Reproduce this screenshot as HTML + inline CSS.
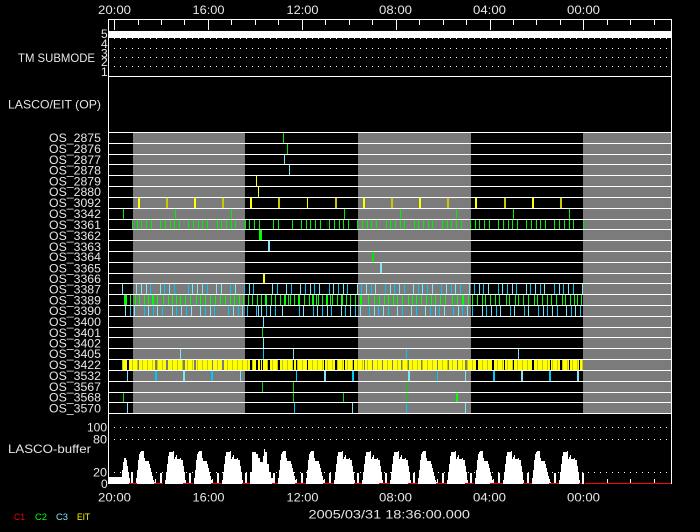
<!DOCTYPE html>
<html><head><meta charset="utf-8"><title>LASCO/EIT plot</title>
<style>
html,body{margin:0;padding:0;background:#000;width:700px;height:532px;overflow:hidden}
svg{display:block}
text{font-family:"Liberation Sans",sans-serif;fill:#e6e6e6;font-size:12px}
.s{font-size:9.5px}
</style></head><body>
<svg width="700" height="532" viewBox="0 0 700 532" xmlns="http://www.w3.org/2000/svg">
<rect width="700" height="532" fill="#000"/>
<defs>
<path id="a" d="M-10 484V479H-9V484ZM-5 484V473H-3V484ZM0 484V478H1V470H2V460H3V454H4V452H5V451H8V458H9V461H13V464H14V468H15V472H16V476H17V480H18V482H19V484Z"/>
<path id="b" d="M-10 484V479H-9V484ZM-5 484V473H-3V484ZM0 484V480H1V472H2V464H3V456H4V452H8V451H9V459H10V457H11V455H12V459H15V458H16V460H18V466H19V472H20V480H21V484Z"/>
<path id="c" d="M-10 484V479H-9V484ZM-5 484V473H-3V484ZM0 484V472H2V452H6V454H8V458H10V462H13V456H14V449H15V452H17V464H19V472H21V478H23V482H24V484Z"/>
</defs>
<g shape-rendering="crispEdges" fill="none">
<!-- gray bands -->
<g fill="#7b7b7b"><rect x="133" y="133" width="112" height="280"/><rect x="358" y="133" width="113" height="280"/><rect x="583" y="133" width="88" height="280"/></g>

<!-- row 14 -->
<path stroke="#80e4f4" d="M122.5 284v10M136.5 284v10M141.5 284v10M146.5 284v10M160.5 284v10M169.5 284v10M192.5 284v10M197.5 284v10M202.5 284v10M216.5 284v10M221.5 284v10M235.5 284v10M249.5 284v10M272.5 284v10M286.5 284v10M300.5 284v10M310.5 284v10M319.5 284v10M333.5 284v10M343.5 284v10M357.5 284v10M366.5 284v10M375.5 284v10M390.5 284v10M399.5 284v10M413.5 284v10M422.5 284v10M432.5 284v10M446.5 284v10M455.5 284v10M469.5 284v10M479.5 284v10M488.5 284v10M502.5 284v10M512.5 284v10M526.5 284v10M535.5 284v10M544.5 284v10M559.5 284v10M568.5 284v10M582.5 284v10"/>
<path stroke="#00c8ff" d="M150.5 284v10M164.5 284v10M174.5 284v10M188.5 284v10M207.5 284v10M230.5 284v10M244.5 284v10M253.5 284v10M277.5 284v10M291.5 284v10M305.5 284v10M314.5 284v10M329.5 284v10M338.5 284v10M347.5 284v10M361.5 284v10M371.5 284v10M385.5 284v10M394.5 284v10M404.5 284v10M418.5 284v10M427.5 284v10M441.5 284v10M451.5 284v10M460.5 284v10M474.5 284v10M483.5 284v10M498.5 284v10M507.5 284v10M516.5 284v10M530.5 284v10M540.5 284v10M554.5 284v10M563.5 284v10M573.5 284v10"/>
<!-- row 15 -->
<path stroke="#00ff00" d="M124.5 295v10M125.5 295v10M126.5 295v10M130.5 295v10M135.5 295v10M139.5 295v10M144.5 295v10M148.5 295v10M152.5 295v10M153.5 295v10M157.5 295v10M163.5 295v10M168.5 295v10M172.5 295v10M176.5 295v10M180.5 295v10M185.5 295v10M190.5 295v10M196.5 295v10M200.5 295v10M205.5 295v10M210.5 295v10M215.5 295v10M220.5 295v10M225.5 295v10M230.5 295v10M234.5 295v10M239.5 295v10M243.5 295v10M248.5 295v10M252.5 295v10M257.5 295v10M261.5 295v10M265.5 295v10M266.5 295v10M271.5 295v10M275.5 295v10M280.5 295v10M284.5 295v10M285.5 295v10M288.5 295v10M290.5 295v10M294.5 295v10M298.5 295v10M299.5 295v10M304.5 295v10M309.5 295v10M312.5 295v10M313.5 295v10M316.5 295v10M318.5 295v10M322.5 295v10M326.5 295v10M327.5 295v10M330.5 295v10M332.5 295v10M337.5 295v10M341.5 295v10M342.5 295v10M346.5 295v10M350.5 295v10M355.5 295v10M360.5 295v10M361.5 295v10M368.5 295v10M374.5 295v10M379.5 295v10M384.5 295v10M388.5 295v10M393.5 295v10M397.5 295v10M402.5 295v10M408.5 295v10M412.5 295v10M416.5 295v10M421.5 295v10M426.5 295v10M431.5 295v10M435.5 295v10M440.5 295v10M445.5 295v10M452.5 295v10M457.5 295v10M462.5 295v10M463.5 295v10M468.5 295v10M472.5 295v10M477.5 295v10M482.5 295v10M485.5 295v10M490.5 295v10M495.5 295v10M499.5 295v10M506.5 295v10M509.5 295v10M515.5 295v10M518.5 295v10M523.5 295v10M528.5 295v10M534.5 295v10M537.5 295v10M542.5 295v10M547.5 295v10M551.5 295v10M556.5 295v10M562.5 295v10M565.5 295v10M570.5 295v10M574.5 295v10M577.5 295v10M581.5 295v10"/>
<!-- row 16 -->
<path stroke="#80e4f4" d="M125.5 306v10M134.5 306v10M148.5 306v10M157.5 306v10M172.5 306v10M181.5 306v10M191.5 306v10M200.5 306v10M210.5 306v10M233.5 306v10M242.5 306v10M258.5 306v10M261.5 306v10M270.5 306v10M282.5 306v10M303.5 306v10M317.5 306v10M327.5 306v10M341.5 306v10M350.5 306v10M360.5 306v10M374.5 306v10M383.5 306v10M397.5 306v10M411.5 306v10M425.5 306v10M435.5 306v10M444.5 306v10M458.5 306v10M467.5 306v10M482.5 306v10M491.5 306v10M500.5 306v10M514.5 306v10M528.5 306v10M543.5 306v10M552.5 306v10M566.5 306v10M575.5 306v10"/>
<path stroke="#00c8ff" d="M130.5 306v10M144.5 306v10M153.5 306v10M162.5 306v10M176.5 306v10M186.5 306v10M205.5 306v10M214.5 306v10M228.5 306v10M238.5 306v10M247.5 306v10M256.5 306v10M266.5 306v10M275.5 306v10M299.5 306v10M313.5 306v10M322.5 306v10M331.5 306v10M345.5 306v10M355.5 306v10M369.5 306v10M378.5 306v10M388.5 306v10M402.5 306v10M416.5 306v10M430.5 306v10M439.5 306v10M453.5 306v10M462.5 306v10M472.5 306v10M486.5 306v10M496.5 306v10M510.5 306v10M524.5 306v10M538.5 306v10M547.5 306v10M557.5 306v10M571.5 306v10M580.5 306v10"/>

<!-- singles -->
<path stroke="#00e800" d="M283.5 133v10M287.5 144v10M372.5 252v10M373.5 252v10"/>
<path stroke="#80e4f4" d="M284.5 155v9M289.5 165v10M263.5 317v10M263.5 338v10M180.5 349v10M293.5 349v10M518.5 349v10M127.5 371v10M465.5 371v10M127.5 403v10M352.5 403v10M465.5 403v10"/>
<path stroke="#00e800" d="M262.5 328v9"/>
<path stroke="#ffff00" d="M256.5 176v10M258.5 187v10M307.5 198v10"/>
<rect x="259" y="230" width="3" height="10" fill="#00ff00"/>
<rect x="268" y="241" width="2" height="10" fill="#80e4f4"/>
<rect x="380" y="263" width="2" height="10" fill="#80e4f4"/>
<rect x="263" y="274" width="2" height="9" fill="#ffff00"/>
<path stroke="#00c8ff" d="M263.5 349v10M406.5 349v10M296.5 371v10M437.5 371v10M294.5 403v10M406.5 403v10"/>

<!-- row 6 yellow -->
<g fill="#ffff00"><rect x="138" y="198" width="2" height="10"/><rect x="194" y="198" width="2" height="10"/><rect x="250" y="198" width="2" height="10"/><rect x="363" y="198" width="2" height="10"/><rect x="419" y="198" width="2" height="10"/><rect x="475" y="198" width="2" height="10"/><rect x="532" y="198" width="2" height="10"/></g>
<g fill="#c8c800"><rect x="166" y="198" width="2" height="10"/><rect x="222" y="198" width="2" height="10"/><rect x="278" y="198" width="2" height="10"/><rect x="335" y="198" width="2" height="10"/><rect x="391" y="198" width="2" height="10"/><rect x="447" y="198" width="2" height="10"/><rect x="504" y="198" width="2" height="10"/><rect x="560" y="198" width="2" height="10"/></g>

<!-- row 7, 8 -->
<path stroke="#00f000" d="M123.5 209v10M175.5 209v10M231.5 209v10M344.5 209v10M400.5 209v10M456.5 209v10M513.5 209v10M569.5 209v10"/>
<path stroke="#00f000" d="M132.5 220v9M137.5 220v9M141.5 220v9M146.5 220v9M151.5 220v9M160.5 220v9M165.5 220v9M170.5 220v9M174.5 220v9M179.5 220v9M188.5 220v9M193.5 220v9M198.5 220v9M202.5 220v9M207.5 220v9M217.5 220v9M221.5 220v9M226.5 220v9M231.5 220v9M235.5 220v9M245.5 220v9M249.5 220v9M254.5 220v9M259.5 220v9M273.5 220v9M278.5 220v9M292.5 220v9M301.5 220v9M306.5 220v9M310.5 220v9M315.5 220v9M320.5 220v9M329.5 220v9M334.5 220v9M339.5 220v9M343.5 220v9M348.5 220v9M357.5 220v9M362.5 220v9M367.5 220v9M371.5 220v9M376.5 220v9M386.5 220v9M390.5 220v9M395.5 220v9M400.5 220v9M404.5 220v9M414.5 220v9M418.5 220v9M423.5 220v9M428.5 220v9M432.5 220v9M442.5 220v9M447.5 220v9M451.5 220v9M456.5 220v9M461.5 220v9M470.5 220v9M475.5 220v9M479.5 220v9M484.5 220v9M489.5 220v9M498.5 220v9M503.5 220v9M508.5 220v9M512.5 220v9M517.5 220v9M526.5 220v9M531.5 220v9M536.5 220v9M540.5 220v9M545.5 220v9M554.5 220v9M559.5 220v9M564.5 220v9M569.5 220v9M573.5 220v9M583.5 220v9"/>

<!-- row 21 yellow -->
<rect x="122" y="360" width="461" height="10" fill="#ffff00"/>
<path d="M122 365H583" stroke="#c8c800" stroke-width="10" stroke-dasharray="1 4"/>
<path stroke="#000" d="M127.5 360v10M128.5 360v10M250.5 360v10M251.5 360v10M256.5 360v10M257.5 360v10M260.5 360v10M262.5 360v10M268.5 360v10M269.5 360v10M278.5 360v10M279.5 360v10M293.5 360v10M296.5 360v10M307.5 360v10M324.5 360v10M335.5 360v10M336.5 360v10M344.5 360v10M353.5 360v10M476.5 360v10M477.5 360v10M492.5 360v10M493.5 360v10M504.5 360v10M513.5 360v10M532.5 360v10M533.5 360v10M550.5 360v10M560.5 360v10M561.5 360v10M569.5 360v10M579.5 360v10"/>
<path stroke="#7b7b7b" d="M138.5 360v10M155.5 360v10M156.5 360v10M166.5 360v10M167.5 360v10M183.5 360v10M184.5 360v10M194.5 360v10M195.5 360v10M212.5 360v10M222.5 360v10M223.5 360v10M364.5 360v10M372.5 360v10M382.5 360v10M392.5 360v10M401.5 360v10M408.5 360v10M421.5 360v10M437.5 360v10M448.5 360v10M457.5 360v10M466.5 360v10M465.5 360v10"/>

<!-- row 22 -->
<g fill="#00c8ff"><rect x="155" y="371" width="2" height="10"/><rect x="211" y="371" width="2" height="10"/><rect x="352" y="371" width="2" height="10"/><rect x="493" y="371" width="2" height="10"/><rect x="549" y="371" width="2" height="10"/><rect x="296" y="371" width="1" height="10"/></g>
<g fill="#80e4f4"><rect x="183" y="371" width="2" height="10"/><rect x="240" y="371" width="1" height="10"/><rect x="324" y="371" width="2" height="10"/><rect x="408" y="371" width="2" height="10"/><rect x="521" y="371" width="2" height="10"/><rect x="577" y="371" width="2" height="10"/></g>
<rect x="465" y="371" width="1" height="10" fill="#80e4f4"/>

<!-- row 23-25 -->
<path stroke="#00d800" d="M262.5 382v10M293.5 382v10M406.5 382v10M293.5 393v9M406.5 393v9M123.5 393v9M343.5 393v9"/>
<rect x="456" y="393" width="2" height="9" fill="#00ff00"/>

<!-- row lines -->
<path stroke="#fff" d="M108 132.500H672M108 143.500H672M108 154.500H672M108 164.500H672M108 175.500H672M108 186.500H672M108 197.500H672M108 208.500H672M108 219.500H672M108 229.500H672M108 240.500H672M108 251.500H672M108 262.500H672M108 273.500H672M108 283.500H672M108 294.500H672M108 305.500H672M108 316.500H672M108 327.500H672M108 337.500H672M108 348.500H672M108 359.500H672M108 370.500H672M108 381.500H672M108 392.500H672M108 402.500H672M108 413.500H672"/>

<!-- top panel -->
<rect x="109" y="31" width="562" height="7" fill="#fff"/>
<path stroke="#fff" stroke-dasharray="1 5" d="M114 38.500H671M114 48.500H671M114 57.500H671M114 66.500H671M114 427.500H671M114 439.500H671M114 472.500H671"/>

<!-- buffer -->
<g fill="#fff">
<path d="M109 484V477H122V470H123V462H124V458H126V460H127V466H128V472H129V478H130V484ZM131 484V472H133V484Z"/>
<use href="#a" x="136"/><use href="#b" x="165"/><use href="#a" x="194"/><use href="#b" x="222"/><use href="#c" x="250"/><use href="#a" x="278"/><use href="#a" x="306"/><use href="#b" x="334"/><use href="#b" x="362"/><use href="#b" x="390"/><use href="#a" x="418"/><use href="#b" x="447"/><use href="#a" x="475"/><use href="#b" x="503"/><use href="#a" x="532"/><use href="#b" x="559"/>
<path d="M582 484V473H584V484Z"/>
</g>
<path stroke="#ff0000" d="M129 483.500H137M154 483.500H163M183 483.500H193M211 483.500H222M242 483.500H250M272 483.500H278M295 483.500H306M323 483.500H334M354 483.500H362M379 483.500H390M408 483.500H418M436 483.500H447M465 483.500H474M490 483.500H503M523 483.500H532M549 483.500H559M579 483.500H582M585 483.500H671"/>

<!-- ticks bottom -->
<path stroke="#fff" d="M607.500 479v4M630.500 479v4M654.500 479v4"/>

<!-- frame -->
<path stroke="#fff" d="M108 19.500H672M108 76.500H672M108.500 19V484M671.500 19V484"/>
<path stroke="#fff" d="M114.500 19V30M208.500 19V30M302.500 19V30M396.500 19V30M490.500 19V30M583.500 19V30M138.500 19V25M161.500 19V25M184.500 19V25M231.500 19V25M255.500 19V25M278.500 19V25M325.500 19V25M349.500 19V25M372.500 19V25M419.500 19V25M443.500 19V25M466.500 19V25M513.500 19V25M536.500 19V25M560.500 19V25M607.500 19V25M630.500 19V25M654.500 19V25"/>
</g>

<!-- text -->
<text x="98" y="14" textLength="33" lengthAdjust="spacingAndGlyphs">20:00</text>
<text x="192.500" y="14" textLength="32" lengthAdjust="spacingAndGlyphs">16:00</text>
<text x="286.500" y="14" textLength="32" lengthAdjust="spacingAndGlyphs">12:00</text>
<text x="379" y="14" textLength="33" lengthAdjust="spacingAndGlyphs">08:00</text>
<text x="473" y="14" textLength="33" lengthAdjust="spacingAndGlyphs">04:00</text>
<text x="567" y="14" textLength="33" lengthAdjust="spacingAndGlyphs">00:00</text>

<text x="98" y="501.700" textLength="33" lengthAdjust="spacingAndGlyphs">20:00</text>
<text x="192.500" y="501.700" textLength="32" lengthAdjust="spacingAndGlyphs">16:00</text>
<text x="286.500" y="501.700" textLength="32" lengthAdjust="spacingAndGlyphs">12:00</text>
<text x="379" y="501.700" textLength="33" lengthAdjust="spacingAndGlyphs">08:00</text>
<text x="473" y="501.700" textLength="33" lengthAdjust="spacingAndGlyphs">04:00</text>
<text x="567" y="501.700" textLength="33" lengthAdjust="spacingAndGlyphs">00:00</text>

<text x="101" y="38">5</text><text x="101" y="48">4</text><text x="101" y="57.500">3</text><text x="101" y="66">2</text><text x="101" y="76">1</text>
<text x="18" y="62" textLength="77" lengthAdjust="spacingAndGlyphs">TM SUBMODE</text>
<text x="8" y="108.500" textLength="93" lengthAdjust="spacingAndGlyphs">LASCO/EIT (OP)</text>

<text x="49" y="142" textLength="52" lengthAdjust="spacingAndGlyphs">OS_2875</text>
<text x="49" y="153" textLength="52" lengthAdjust="spacingAndGlyphs">OS_2876</text>
<text x="49" y="164" textLength="52" lengthAdjust="spacingAndGlyphs">OS_2877</text>
<text x="49" y="174.700" textLength="52" lengthAdjust="spacingAndGlyphs">OS_2878</text>
<text x="49" y="185.300" textLength="52" lengthAdjust="spacingAndGlyphs">OS_2879</text>
<text x="49" y="196" textLength="52" lengthAdjust="spacingAndGlyphs">OS_2880</text>
<text x="49" y="207" textLength="52" lengthAdjust="spacingAndGlyphs">OS_3092</text>
<text x="49" y="218" textLength="52" lengthAdjust="spacingAndGlyphs">OS_3342</text>
<text x="49" y="229" textLength="52" lengthAdjust="spacingAndGlyphs">OS_3361</text>
<text x="49" y="240" textLength="52" lengthAdjust="spacingAndGlyphs">OS_3362</text>
<text x="49" y="251" textLength="52" lengthAdjust="spacingAndGlyphs">OS_3363</text>
<text x="49" y="261" textLength="52" lengthAdjust="spacingAndGlyphs">OS_3364</text>
<text x="49" y="272.700" textLength="52" lengthAdjust="spacingAndGlyphs">OS_3365</text>
<text x="49" y="283" textLength="52" lengthAdjust="spacingAndGlyphs">OS_3366</text>
<text x="49" y="293.700" textLength="52" lengthAdjust="spacingAndGlyphs">OS_3387</text>
<text x="49" y="304.700" textLength="52" lengthAdjust="spacingAndGlyphs">OS_3389</text>
<text x="49" y="315" textLength="52" lengthAdjust="spacingAndGlyphs">OS_3390</text>
<text x="49" y="326" textLength="52" lengthAdjust="spacingAndGlyphs">OS_3400</text>
<text x="49" y="337" textLength="52" lengthAdjust="spacingAndGlyphs">OS_3401</text>
<text x="49" y="347.500" textLength="52" lengthAdjust="spacingAndGlyphs">OS_3402</text>
<text x="49" y="358" textLength="52" lengthAdjust="spacingAndGlyphs">OS_3405</text>
<text x="49" y="369" textLength="52" lengthAdjust="spacingAndGlyphs">OS_3422</text>
<text x="49" y="380" textLength="52" lengthAdjust="spacingAndGlyphs">OS_3532</text>
<text x="49" y="391" textLength="52" lengthAdjust="spacingAndGlyphs">OS_3567</text>
<text x="49" y="401.500" textLength="52" lengthAdjust="spacingAndGlyphs">OS_3568</text>
<text x="49" y="412.700" textLength="52" lengthAdjust="spacingAndGlyphs">OS_3570</text>

<text x="87" y="431.700" textLength="20" lengthAdjust="spacingAndGlyphs">100</text>
<text x="93" y="443.700" textLength="14" lengthAdjust="spacingAndGlyphs">80</text>
<text x="93" y="476.700" textLength="14" lengthAdjust="spacingAndGlyphs">20</text>
<text x="101" y="488">0</text>
<text x="8" y="453" textLength="83" lengthAdjust="spacingAndGlyphs">LASCO-buffer</text>

<text class="s" x="14" y="520" textLength="11" lengthAdjust="spacingAndGlyphs" style="fill:#ff0000">C1</text>
<text class="s" x="35" y="520" textLength="12" lengthAdjust="spacingAndGlyphs" style="fill:#00ff00">C2</text>
<text class="s" x="56" y="520" textLength="12" lengthAdjust="spacingAndGlyphs" style="fill:#80e4f4">C3</text>
<text class="s" x="77" y="520" textLength="13" lengthAdjust="spacingAndGlyphs" style="fill:#ffff00">EIT</text>

<text x="308.500" y="518.300" textLength="161.500" lengthAdjust="spacingAndGlyphs">2005/03/31 18:36:00.000</text>
</svg>
</body></html>
